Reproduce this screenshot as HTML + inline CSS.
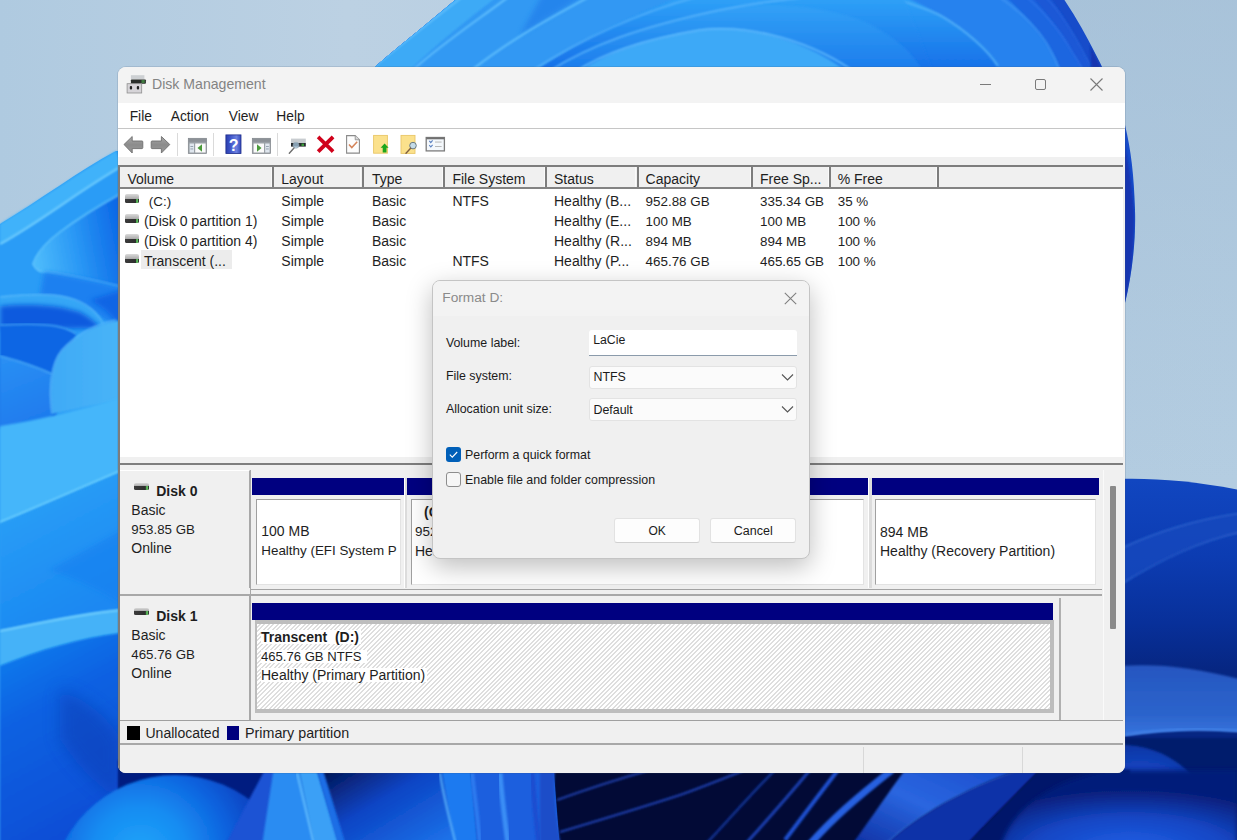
<!DOCTYPE html>
<html><head><meta charset="utf-8">
<style>
html,body{margin:0;padding:0;width:1237px;height:840px;overflow:hidden;background:#adc8de;}
*{box-sizing:border-box;}
body{font-family:"Liberation Sans",sans-serif;color:#1e1e1e;position:relative;}
.a{position:absolute;}
.t{position:absolute;white-space:pre;line-height:1;}
#bg{position:absolute;left:0;top:0;}
#winshadow{position:absolute;left:117px;top:66px;width:1009px;height:708px;border-radius:9px;background:rgba(60,80,110,0.15);filter:blur(0.6px);}
#win{position:absolute;left:0;top:0;width:1237px;height:840px;clip-path:inset(67px 112px 67px 118px round 8px);}
</style></head>
<body>
<svg id="bg" width="1237" height="840" viewBox="0 0 1237 840">
<defs>
  <linearGradient id="sky" x1="0" y1="0" x2="1" y2="0">
    <stop offset="0" stop-color="#afcae0"/>
    <stop offset="0.28" stop-color="#bcd1e3"/>
    <stop offset="0.85" stop-color="#b2cbe0"/>
    <stop offset="1" stop-color="#b4cde1"/>
  </linearGradient>
  <linearGradient id="topb" x1="0" y1="0" x2="1" y2="0">
    <stop offset="0" stop-color="#3ba4f4"/>
    <stop offset="0.5" stop-color="#2c8df0"/>
    <stop offset="0.85" stop-color="#2a7cec"/>
    <stop offset="1" stop-color="#1a4cd4"/>
  </linearGradient>
  <linearGradient id="leftb" x1="0" y1="0" x2="0" y2="1">
    <stop offset="0" stop-color="#3aa2f3"/>
    <stop offset="0.2" stop-color="#2b8cef"/>
    <stop offset="0.45" stop-color="#2e92f0"/>
    <stop offset="0.62" stop-color="#2480ec"/>
    <stop offset="0.8" stop-color="#1563e0"/>
    <stop offset="0.92" stop-color="#0b44c4"/>
    <stop offset="1" stop-color="#0d4ac8"/>
  </linearGradient>
  <linearGradient id="rightb" x1="0" y1="0" x2="0" y2="1">
    <stop offset="0" stop-color="#0e42ba"/>
    <stop offset="0.3" stop-color="#0b37a8"/>
    <stop offset="0.5" stop-color="#082c92"/>
    <stop offset="1" stop-color="#072680"/>
  </linearGradient>
  <radialGradient id="sph1" cx="0.5" cy="0.75" r="0.6">
    <stop offset="0" stop-color="#1e8ef0"/>
    <stop offset="0.6" stop-color="#1466e0"/>
    <stop offset="1" stop-color="#0b44c4"/>
  </radialGradient>
  <radialGradient id="sph2" cx="0.5" cy="0.85" r="0.6">
    <stop offset="0" stop-color="#1f62e0"/>
    <stop offset="1" stop-color="#0a2f9c"/>
  </radialGradient>
  <radialGradient id="sph3" cx="0.35" cy="0.8" r="0.7">
    <stop offset="0" stop-color="#1a55d8"/>
    <stop offset="1" stop-color="#0a2a8e"/>
  </radialGradient>
  <linearGradient id="navy" x1="0" y1="0" x2="1" y2="0">
    <stop offset="0" stop-color="#020c40"/>
    <stop offset="1" stop-color="#031050"/>
  </linearGradient>
  <linearGradient id="bigpet" gradientUnits="userSpaceOnUse" x1="0" y1="0" x2="0" y2="70"><stop offset="0" stop-color="#2ea0f7"/><stop offset="1" stop-color="#1670e8"/></linearGradient>
  <linearGradient id="bigpet2" gradientUnits="userSpaceOnUse" x1="0" y1="0" x2="0" y2="70"><stop offset="0" stop-color="#34a4f7"/><stop offset="1" stop-color="#1c7cec"/></linearGradient>
  <filter id="bl" x="-5%" y="-5%" width="110%" height="110%"><feGaussianBlur stdDeviation="1"/></filter>
  <filter id="bl2" x="-20%" y="-20%" width="140%" height="140%"><feGaussianBlur stdDeviation="2.5"/></filter>
  <filter id="bl3" x="-30%" y="-30%" width="160%" height="160%"><feGaussianBlur stdDeviation="8"/></filter>
</defs>
<rect width="1237" height="840" fill="url(#sky)"/>
<linearGradient id="skyR" gradientUnits="userSpaceOnUse" x1="0" y1="0" x2="0" y2="480"><stop offset="0" stop-color="#9fbbd4" stop-opacity="0.55"/><stop offset="1" stop-color="#9fbbd4" stop-opacity="0"/></linearGradient>
<rect x="1060" y="0" width="177" height="480" fill="url(#skyR)"/>
<!-- ===== top bloom ===== -->
<clipPath id="bloomclip"><path d="M461 -5 C430 22 398 46 360 80 L360 200 L1125 200 L1125 303 C1132 275 1136 240 1135 210 C1134 175 1131 150 1125 125 C1118 100 1108 78 1096 55 C1086 35 1075 15 1061 -5 Z"/></clipPath>
<g clip-path="url(#bloomclip)">
  <rect x="300" y="-10" width="900" height="320" fill="#174cca"/>
  <path d="M300 -10 L1044 -10 C1060 10 1075 35 1090 65 C1110 100 1122 150 1128 200 L300 200Z" fill="#1a58d6" filter="url(#bl)"/>
  <path d="M300 -10 L1025 -10 C1040 5 1060 30 1071 50 C1080 65 1110 110 1118 200 L300 200Z" fill="#1c66e0" filter="url(#bl)"/>
  <path d="M300 -10 L998 -10 C1015 5 1035 25 1046 42 C1055 55 1080 100 1100 200 L300 200Z" fill="#2682ee" filter="url(#bl)"/>
  <path d="M300 -10 L892 -10 C910 0 930 8 943 17 C965 30 990 50 998 66 L1000 200 L300 200Z" fill="url(#bigpet)" filter="url(#bl)"/>
  <path d="M998 -4 C1015 8 1035 25 1046 42 C1052 52 1056 60 1059 70" fill="none" stroke="#4a9cf6" stroke-width="1.3" opacity="0.8" filter="url(#bl)"/>
  <path d="M1025 -4 C1040 8 1060 30 1071 50 C1076 58 1080 64 1083 70" fill="none" stroke="#3a7ef0" stroke-width="1.2" opacity="0.7" filter="url(#bl)"/>
  <path d="M1044 -4 C1060 10 1075 35 1090 65" fill="none" stroke="#3470e6" stroke-width="1.1" opacity="0.7" filter="url(#bl)"/>
  <path d="M892 -2 C915 5 935 12 943 17 C965 30 988 50 998 66" fill="none" stroke="#58b4fa" stroke-width="1.8" filter="url(#bl)"/>
  <!-- inner petal A region -->
  <path d="M530 75 C580 40 640 12 700 -10 L300 -10 L300 75Z" fill="#3098f3" filter="url(#bl)"/>
  <path d="M530 75 C580 40 640 12 700 -10 L900 -10 C910 10 920 40 935 75Z" fill="url(#bigpet)" filter="url(#bl)"/>
  <path d="M548 75 C590 45 640 27 720 10 C780 -2 850 10 880 30 C900 42 915 55 925 75Z" fill="url(#bigpet2)" filter="url(#bl)"/>
  <path d="M575 75 C600 55 640 40 700 30 C740 25 800 35 852 75Z" fill="#3ea9f7" filter="url(#bl)"/>
  <path d="M575 72 C600 55 640 40 700 30 C740 25 800 35 852 70" fill="none" stroke="#66c0ff" stroke-width="1.5" filter="url(#bl)"/>
  <path d="M548 72 C590 45 640 27 720 10 C750 4 780 0 800 -2" fill="none" stroke="#5fb8fd" stroke-width="1.4" filter="url(#bl)"/>
  <path d="M530 72 C580 40 640 12 700 -4" fill="none" stroke="#5fb8fd" stroke-width="1.3" filter="url(#bl)"/>
  <!-- left petals -->
  <path d="M300 -10 L507 -10 C480 10 440 40 405 75 L300 75Z" fill="#3eaaf6" filter="url(#bl)"/>
  <path d="M507 -10 L590 -10 C560 10 510 40 470 75 L410 75 C440 45 475 15 507 -10Z" fill="#3299f3" filter="url(#bl)"/>
  <path d="M545 -10 L590 -10 C570 5 545 20 520 35 Z" fill="#1f78e8" opacity="0.6" filter="url(#bl2)"/>
  <path d="M413 70 C440 45 475 22 507 -2" fill="none" stroke="#66c4ff" stroke-width="1.6" filter="url(#bl)"/>
  <path d="M472 70 C510 40 550 18 587 -2" fill="none" stroke="#66c4ff" stroke-width="1.6" filter="url(#bl)"/>
  <path d="M370 70 C400 45 430 22 461 -2" fill="none" stroke="#70c8ff" stroke-width="1.4" filter="url(#bl)"/>
  <!-- right side sliver shading -->
  <path d="M1090 45 C1112 85 1128 140 1134 210 C1135 250 1130 285 1125 303 L1105 303 L1090 45Z" fill="#1236b0" filter="url(#bl)"/>
</g>
<!-- ===== left bloom ===== -->
<linearGradient id="tipg" x1="0" y1="0.5" x2="1" y2="0.3">
  <stop offset="0" stop-color="#4cbafb"/><stop offset="0.45" stop-color="#2a98f5"/><stop offset="1" stop-color="#0a66e6"/>
</linearGradient>
<linearGradient id="petC" x1="0" y1="0" x2="0.3" y2="1">
  <stop offset="0" stop-color="#2a90f4"/><stop offset="1" stop-color="#1f7cee"/>
</linearGradient>
<linearGradient id="petD" x1="0" y1="0" x2="1" y2="0">
  <stop offset="0" stop-color="#40aaf6"/><stop offset="1" stop-color="#48b4f8"/>
</linearGradient>
<linearGradient id="lowL" x1="0" y1="0" x2="0.3" y2="1">
  <stop offset="0" stop-color="#1282f0"/><stop offset="0.4" stop-color="#0a62e2"/><stop offset="1" stop-color="#0a4ed6"/>
</linearGradient>
<linearGradient id="midL" x1="0" y1="0" x2="0.4" y2="1">
  <stop offset="0" stop-color="#2ea4f7"/><stop offset="1" stop-color="#1a88f2"/>
</linearGradient>
<radialGradient id="sphL" cx="0.5" cy="0.9" r="0.7">
  <stop offset="0" stop-color="#2290f4"/><stop offset="0.7" stop-color="#1670ea"/><stop offset="1" stop-color="#0d56da"/>
</radialGradient>
<path d="M116 151 C80 170 40 200 0 224 L-10 230 L-10 850 L122 850 L122 151Z" fill="#2a9cf6"/>
<path d="M116 151 C80 172 40 200 0 224 L0 244 C40 222 80 190 122 166 Z" fill="#40b2fa" filter="url(#bl)"/>
<path d="M0 244 C40 222 80 190 122 166" fill="none" stroke="#7ad4ff" stroke-width="1.8" filter="url(#bl)"/>
<!-- tip petal -->
<path d="M122 193 C100 205 76 220 60 232 C45 243 36 255 33 264 C36 270 40 272 44 272 C60 274 80 277 122 287 Z" fill="url(#tipg)" filter="url(#bl)"/>
<path d="M122 193 C100 205 76 220 60 232 C45 243 36 255 33 264 C36 270 40 272 44 272 C60 274 80 277 122 287" fill="none" stroke="#70cfff" stroke-width="1.5" opacity="0.8" filter="url(#bl)"/>
<path d="M44 272 C60 274 80 277 122 287 L122 330 C100 315 70 300 40 295 Z" fill="#1a80f0" filter="url(#bl2)"/>
<path d="M90 300 C105 308 115 318 122 330 L122 290 Z" fill="#0a5ee2" opacity="0.8" filter="url(#bl2)"/>
<!-- petal B / C -->
<path d="M0 297 C20 295 46 294 60 296 C80 299 95 309 103 323 L0 326 Z" fill="#36a6f6" filter="url(#bl)"/>
<path d="M0 297 C20 295 46 294 60 296 C80 299 95 309 103 323" fill="none" stroke="#62c0fc" stroke-width="1.4" opacity="0.8" filter="url(#bl)"/>
<path d="M0 306 C30 303 60 305 80 312 C90 317 96 323 100 328 L0 330Z" fill="#0b5ade" filter="url(#bl2)"/>
<path d="M0 325 C20 324 46 323 60 327 C68 329 72 331 76 334 L55 420 L0 428 Z" fill="#0f66e4" filter="url(#bl)"/>
<path d="M0 325 C20 324 46 323 60 327 C68 329 72 331 76 334" fill="none" stroke="#50b0f8" stroke-width="1.4" opacity="0.8" filter="url(#bl)"/>
<path d="M0 356 C15 360 35 366 52 374 L52 420 L0 428 Z" fill="url(#petC)" filter="url(#bl)"/>
<path d="M0 356 C15 360 35 366 52 374" fill="none" stroke="#58b8fa" stroke-width="1.4" opacity="0.8" filter="url(#bl)"/>

<!-- round petal D -->
<path d="M122 320 C95 324 76 335 62 350 C52 362 48 385 52 414 L122 400 Z" fill="url(#petD)" filter="url(#bl)"/>
<path d="M116 320 C95 324 76 335 62 350 C52 362 48 385 52 414" fill="none" stroke="#6ac4ff" stroke-width="1.3" opacity="0.7" filter="url(#bl)"/>
<!-- light band -->
<path d="M0 426 C40 420 80 410 122 397 L122 472 C80 489 40 507 0 524 Z" fill="#44b6fa" filter="url(#bl)"/>
<path d="M0 522 C40 506 80 488 122 470" fill="none" stroke="#72d2ff" stroke-width="1.6" opacity="0.9" filter="url(#bl)"/>
<path d="M0 524 C40 508 80 490 122 472 L122 612 C80 616 40 624 0 632 Z" fill="url(#midL)" filter="url(#bl)"/>
<path d="M50 570 C80 580 110 595 122 605 L122 530 Z" fill="#1580f0" opacity="0.6" filter="url(#bl2)"/>
<!-- lower light band -->
<path d="M0 630 C40 622 80 613 122 609 L122 633 C80 638 40 650 0 666 Z" fill="#44b2f8" filter="url(#bl)"/>
<path d="M0 631 C40 623 80 614 122 610" fill="none" stroke="#80d8ff" stroke-width="1.6" filter="url(#bl)"/>
<path d="M0 666 C40 650 80 638 122 633 L122 850 L0 850 Z" fill="url(#lowL)" filter="url(#bl)"/>
<path d="M60 690 C90 700 110 720 122 740 L122 800 C100 790 80 770 60 740Z" fill="#0740b8" opacity="0.6" filter="url(#bl3)"/>
<!-- ===== right lower ===== -->
<linearGradient id="rtop" gradientUnits="userSpaceOnUse" x1="0" y1="480" x2="0" y2="670">
  <stop offset="0" stop-color="#1146c0"/><stop offset="0.4" stop-color="#0c3cb2"/><stop offset="0.75" stop-color="#08309a"/><stop offset="1" stop-color="#062682"/>
</linearGradient>
<linearGradient id="rband" gradientUnits="userSpaceOnUse" x1="0" y1="665" x2="0" y2="736">
  <stop offset="0" stop-color="#2556c0"/><stop offset="0.7" stop-color="#2c64cc"/><stop offset="1" stop-color="#3674de"/>
</linearGradient>
<radialGradient id="sphRR" gradientUnits="userSpaceOnUse" cx="1140" cy="830" r="95">
  <stop offset="0" stop-color="#1f5ee0"/><stop offset="0.6" stop-color="#1548c4"/><stop offset="1" stop-color="#0a2f9a"/>
</radialGradient>
<path d="M1120 479 C1160 478 1200 482 1250 492 L1250 850 L1120 850 Z" fill="url(#rtop)"/>
<path d="M1120 549 C1160 530 1200 518 1250 512 L1250 532 C1200 538 1160 560 1120 585 Z" fill="#1248be" opacity="0.8" filter="url(#bl)"/>
<path d="M1120 549 C1160 530 1200 518 1250 512" fill="none" stroke="#2e62cc" stroke-width="1.6" filter="url(#bl)"/>
<path d="M1120 585 C1160 560 1200 540 1250 530" fill="none" stroke="#2a5cc8" stroke-width="1.6" filter="url(#bl)"/>
<path d="M1120 666 C1160 663 1200 668 1250 682 L1250 732 C1200 728 1160 730 1120 736 Z" fill="url(#rband)" filter="url(#bl)"/>
<path d="M1120 736 C1160 729 1200 727 1250 732" fill="none" stroke="#4a8cf2" stroke-width="2.2" filter="url(#bl)"/>
<path d="M1120 738 L1250 738 L1250 850 L1120 850Z" fill="#051c6c" filter="url(#bl)"/>
<path d="M1110 745 C1170 742 1210 775 1224 850 L1110 850Z" fill="url(#sphRR)" filter="url(#bl)"/>
<!-- ===== bottom strip ===== -->
<radialGradient id="sphB" gradientUnits="userSpaceOnUse" cx="140" cy="855" r="120">
  <stop offset="0" stop-color="#20a6fa"/><stop offset="0.4" stop-color="#168cf2"/><stop offset="0.75" stop-color="#0e62de"/><stop offset="1" stop-color="#0a46c4"/>
</radialGradient>
<linearGradient id="navL" x1="0" y1="0" x2="1" y2="1">
  <stop offset="0" stop-color="#020a3c"/><stop offset="0.45" stop-color="#0c44c4"/><stop offset="1" stop-color="#1f78ee"/>
</linearGradient>
<rect x="118" y="760" width="450" height="85" fill="#0a3aae"/>
<path d="M118 760 L275 760 L232 845 L118 845Z" fill="#061e80" filter="url(#bl)"/>
<circle cx="175" cy="900" r="125" fill="url(#sphB)" filter="url(#bl)"/>
<path d="M270 760 L290 760 L262 845 L225 845Z" fill="#1a52d4" filter="url(#bl)"/>
<path d="M275 760 L298 760 L316 845 L262 845Z" fill="#2a8cf2" filter="url(#bl)"/>
<path d="M297 760 L314 760 L340 845 L314 845Z" fill="#3aa0f6" filter="url(#bl)"/>
<path d="M297 773 L314 845" stroke="#70c8ff" stroke-width="1.5" fill="none" filter="url(#bl)"/>
<path d="M314 760 L322 760 L348 845 L338 845Z" fill="#1f6ee6" filter="url(#bl)"/>
<path d="M320 760 L445 760 L460 845 L346 845Z" fill="url(#navL)" filter="url(#bl)"/>
<path d="M440 760 L470 760 L478 845 L455 845Z" fill="#1f7af0" filter="url(#bl)"/>
<path d="M440 773 C444 800 450 820 456 845" stroke="#58b0fa" stroke-width="2" fill="none" filter="url(#bl)"/>
<path d="M470 760 L555 760 L562 845 L478 845Z" fill="#1a5ede" filter="url(#bl)"/>
<path d="M472 773 C475 800 478 820 480 845" stroke="#2e7cf0" stroke-width="4" fill="none" filter="url(#bl)"/>
<path d="M500 773 C502 800 505 820 508 845" stroke="#3a8ef5" stroke-width="5" fill="none" filter="url(#bl)"/>
<path d="M532 773 C534 800 536 820 539 845" stroke="#1a4ed0" stroke-width="5" fill="none" filter="url(#bl)"/>
<!-- navy center -->
<linearGradient id="petR" x1="0" y1="1" x2="1" y2="0">
  <stop offset="0" stop-color="#0a2a9c"/><stop offset="0.5" stop-color="#2a66e0"/><stop offset="1" stop-color="#1a4ccc"/>
</linearGradient>
<radialGradient id="sphR" cx="0.55" cy="1" r="0.75">
  <stop offset="0" stop-color="#2060e6"/><stop offset="0.55" stop-color="#1446c4"/><stop offset="1" stop-color="#061e7a"/>
</radialGradient>
<path d="M553 760 L1040 760 L1040 850 L560 850 Z" fill="#020a36"/>
<path d="M540 760 L556 760 C552 790 555 820 562 850 L540 850Z" fill="#1a4ec8" filter="url(#bl)"/>
<g fill="none" filter="url(#bl)">
  <path d="M557 800 C590 788 615 780 650 770" stroke="#1e3ea8" stroke-width="2.2"/>
  <path d="M560 832 C600 820 640 808 680 795 C700 788 720 780 745 770" stroke="#1e40b0" stroke-width="2.2"/>
  <path d="M700 850 C720 830 745 800 775 770" stroke="#12308f" stroke-width="2.5"/>
  <path d="M740 850 C760 828 785 800 810 770" stroke="#1a3fb0" stroke-width="3"/>
  <path d="M785 840 C800 820 815 800 838 770" stroke="#1f4fcf" stroke-width="4"/>
  <path d="M805 850 C830 820 860 795 892 770" stroke="#2560e0" stroke-width="7"/>
</g>
<path d="M848 850 C870 820 890 790 905 770 L1020 770 C960 790 910 820 880 850Z" fill="url(#petR)" filter="url(#bl)"/>
<path d="M880 850 C910 820 960 790 1020 772" fill="none" stroke="#3f80f0" stroke-width="2" filter="url(#bl)"/>
<path d="M880 850 C910 820 960 790 1020 770 L1040 770 C1010 800 985 825 962 850Z" fill="#0c32a8" filter="url(#bl)"/>
<path d="M962 850 C985 825 1010 800 1040 770 L1130 770 L1130 850Z" fill="#04166a" filter="url(#bl)"/>
<path d="M1000 850 C1010 810 1050 780 1110 770 L1237 770 L1237 850Z" fill="url(#sphR)" filter="url(#bl2)"/>
</svg>

<div id="winshadow"></div>
<div id="win">
<div class="a" style="left:118px;top:67px;width:1007.0px;height:706.0px;background:#f0f0f0;"></div>
<div class="a" style="left:118px;top:67px;width:1007.0px;height:36.0px;background:#f3f3f3;"></div>
<div class="t" style="left:152.0px;top:77.26px;font-size:14.1px;color:#838383;">Disk Management</div>
<div class="a" style="left:979.5px;top:83.5px;width:11.5px;height:1.1px;background:#7a7a7a;"></div>
<div class="a" style="left:1035px;top:79px;width:11.0px;height:11.0px;border:1.2px solid #7a7a7a;border-radius:2px;"></div>
<svg class="a" style="left:1089px;top:77px" width="15" height="15" viewBox="0 0 15 15"><path d="M1.5 1.5L13.5 13.5M13.5 1.5L1.5 13.5" stroke="#7a7a7a" stroke-width="1.1" fill="none"/></svg>
<div class="a" style="left:118px;top:103px;width:1007.0px;height:25.0px;background:#fff;"></div>
<div class="t" style="left:129.7px;top:109.92px;font-size:13.8px;">File</div>
<div class="t" style="left:170.7px;top:109.92px;font-size:13.8px;">Action</div>
<div class="t" style="left:228.8px;top:109.92px;font-size:13.8px;">View</div>
<div class="t" style="left:276.3px;top:109.92px;font-size:13.8px;">Help</div>
<div class="a" style="left:118px;top:128px;width:1007.0px;height:1.2px;background:#c6c6c6;"></div>
<div class="a" style="left:118px;top:129.2px;width:1007.0px;height:27.8px;background:#fff;"></div>
<div class="a" style="left:118px;top:157px;width:1007.0px;height:7.5px;background:#f0f0f0;"></div>
<div class="a" style="left:176.5px;top:133px;width:1.3px;height:23.0px;background:#dadada;"></div>
<div class="a" style="left:213px;top:133px;width:1.3px;height:23.0px;background:#dadada;"></div>
<div class="a" style="left:277px;top:133px;width:1.3px;height:23.0px;background:#dadada;"></div>
<svg class="a" style="left:118px;top:129px" width="340" height="28" viewBox="118 129 340 28">
<defs>
<linearGradient id="arrg" x1="0" y1="0" x2="0" y2="1"><stop offset="0" stop-color="#a8a8a8"/><stop offset="0.5" stop-color="#8c8c8c"/><stop offset="1" stop-color="#9a9a9a"/></linearGradient>
<linearGradient id="helpg" x1="0" y1="0" x2="1" y2="0"><stop offset="0" stop-color="#2a3fb0"/><stop offset="0.3" stop-color="#3f55c8"/><stop offset="0.7" stop-color="#6a80e0"/><stop offset="1" stop-color="#3448b8"/></linearGradient>
</defs>
<!-- back arrow -->
<path d="M124 144.5 L132.2 136.5 L132.2 141 L142.2 141 Q142.8 141 142.8 142 L142.8 147.6 Q142.8 148.6 142 148.6 L132.2 148.6 L132.2 153 Z" fill="url(#arrg)" stroke="#6e6e6e" stroke-width="0.9" stroke-linejoin="round"/>
<!-- forward arrow -->
<path d="M169.8 144.5 L161.4 136.5 L161.4 141 L152 141 Q151.2 141 151.2 142 L151.2 147.6 Q151.2 148.6 152 148.6 L161.4 148.6 L161.4 153 Z" fill="url(#arrg)" stroke="#6e6e6e" stroke-width="0.9" stroke-linejoin="round"/>
<!-- console tree icon -->
<rect x="188.3" y="138.3" width="18.3" height="15.2" fill="#9aa0a6" stroke="#80858b" stroke-width="0.7"/>
<rect x="188.6" y="138.6" width="17.8" height="3.2" fill="#8c9197"/>
<rect x="189.6" y="143.5" width="4.4" height="9" fill="#dfe6ee"/>
<rect x="195.2" y="143.5" width="10.4" height="9" fill="#fafafa"/>
<rect x="190.4" y="146" width="2.8" height="0.9" fill="#8d9aa8"/>
<rect x="190.4" y="148.5" width="2.8" height="0.9" fill="#8d9aa8"/>
<path d="M197.5 148 L202 144.3 L202 151.7 Z" fill="#4a9a3a"/>
<!-- help icon -->
<rect x="225.9" y="134.9" width="15.1" height="18.7" fill="url(#helpg)" stroke="#1e2d8a" stroke-width="0.8"/>
<text x="233.6" y="151.3" font-family="Liberation Sans" font-weight="700" font-size="16" fill="#fff" text-anchor="middle">?</text>
<!-- action pane icon -->
<rect x="252.3" y="138.3" width="18.3" height="15.2" fill="#9aa0a6" stroke="#80858b" stroke-width="0.7"/>
<rect x="252.6" y="138.6" width="17.8" height="3.2" fill="#8c9197"/>
<rect x="253.6" y="143.5" width="10.4" height="9" fill="#fafafa"/>
<rect x="265.2" y="143.5" width="4.4" height="9" fill="#dfe6ee"/>
<rect x="266" y="146" width="2.8" height="0.9" fill="#8d9aa8"/>
<rect x="266" y="148.5" width="2.8" height="0.9" fill="#8d9aa8"/>
<path d="M261.5 148 L257 144.3 L257 151.7 Z" fill="#4a9a3a"/>
<!-- connect disk icon -->
<rect x="291" y="138.6" width="14.8" height="4.4" fill="#c8ccd0"/>
<rect x="291" y="143" width="14.8" height="3.6" fill="#262a2e"/>
<rect x="301.5" y="143.6" width="2.5" height="2.4" fill="#3a9a3a"/>
<circle cx="296" cy="145.2" r="3" fill="#a8c8e0" fill-opacity="0.75" stroke="#8a9aa8" stroke-width="0.6"/>
<path d="M294 148 L289.3 153.3" stroke="#707070" stroke-width="1.4" stroke-linecap="round"/>
<!-- red X -->
<path d="M319.5 138.3 L331.7 150.2 M331.7 138.3 L319.5 150.2" stroke="#d0021b" stroke-width="3.8" stroke-linecap="square"/>
<!-- doc check -->
<path d="M346.6 135.6 L355.2 135.6 L359.4 139.8 L359.4 153.1 L346.6 153.1 Z" fill="#fdfdfd" stroke="#8a8a8a" stroke-width="1.1"/>
<path d="M355.2 135.6 L355.2 139.8 L359.4 139.8" fill="#d8d8d8" stroke="#8a8a8a" stroke-width="0.8"/>
<path d="M349 144.5 L351.8 147.6 L357.2 141.8" fill="none" stroke="#d4845a" stroke-width="1.5"/>
<!-- folder up -->
<rect x="373.6" y="135.4" width="13.8" height="17.8" fill="#fbe18c" stroke="#e9c667" stroke-width="0.9"/>
<path d="M384.6 143.6 L388.6 147.8 L386.5 147.8 L386.5 152.6 L382.7 152.6 L382.7 147.8 L380.6 147.8 Z" fill="#1ca61c"/>
<!-- folder search -->
<rect x="401" y="135.4" width="14" height="18" fill="#fbe18c" stroke="#e9c667" stroke-width="0.9"/>
<circle cx="413" cy="145.6" r="3.3" fill="#c4dbe8" stroke="#6a7a80" stroke-width="1"/>
<path d="M410.6 148.2 L406 153.3" stroke="#806040" stroke-width="1.4" stroke-linecap="round"/>
<!-- properties -->
<rect x="426.2" y="137.5" width="18.2" height="13.4" fill="#f4f8fc" stroke="#7c7c7c" stroke-width="1.3"/>
<rect x="426.2" y="137.5" width="18.2" height="1.8" fill="#707070"/>
<path d="M429.3 140.8 L430.8 142.6 L432.6 140.4 M429.3 145.2 L430.8 147 L432.6 144.8" fill="none" stroke="#5a80c0" stroke-width="1.1"/>
<rect x="435" y="141.6" width="6.6" height="0.9" fill="#b0b0b0"/>
<rect x="435" y="146" width="6.6" height="0.9" fill="#b0b0b0"/>
</svg>
<!-- title icon -->
<svg class="a" style="left:126px;top:74px" width="22" height="21" viewBox="126 74 22 21">
<rect x="130.9" y="75.2" width="13.5" height="4.3" fill="#cdd0d3"/>
<rect x="130.9" y="79.4" width="15" height="4.3" rx="0.8" fill="#2a2e2a"/>
<rect x="141.5" y="80" width="3.2" height="3" fill="#3f7a3f"/>
<rect x="127.1" y="83.7" width="14.6" height="9.3" fill="#d6d4d8" stroke="#8f8f8f" stroke-width="0.8"/>
<rect x="129.8" y="85.9" width="2.3" height="3.5" rx="1" fill="#222"/>
<rect x="136.8" y="85.9" width="2.3" height="3.5" rx="1" fill="#222"/>
</svg>

<div class="a" style="left:118px;top:164.5px;width:1005.0px;height:298.5px;background:#fff;"></div>
<div class="a" style="left:118px;top:164.5px;width:1005.0px;height:2.0px;background:#7d7d7d;"></div>
<div class="a" style="left:118px;top:164.5px;width:2.2px;height:608.5px;background:#7d7d7d;"></div>
<div class="a" style="left:120.2px;top:166.5px;width:1002.8px;height:20.5px;background:#f0f0f0;"></div>
<div class="a" style="left:120.2px;top:187px;width:1002.8px;height:2.0px;background:#838383;"></div>
<div class="a" style="left:270.5px;top:166.5px;width:1.0px;height:20.5px;background:#fafafa;"></div>
<div class="a" style="left:272px;top:166.5px;width:2.0px;height:20.5px;background:#7d7d7d;"></div>
<div class="a" style="left:360.0px;top:166.5px;width:1.0px;height:20.5px;background:#fafafa;"></div>
<div class="a" style="left:361.5px;top:166.5px;width:2.0px;height:20.5px;background:#7d7d7d;"></div>
<div class="a" style="left:441.5px;top:166.5px;width:1.0px;height:20.5px;background:#fafafa;"></div>
<div class="a" style="left:443px;top:166.5px;width:2.0px;height:20.5px;background:#7d7d7d;"></div>
<div class="a" style="left:543.5px;top:166.5px;width:1.0px;height:20.5px;background:#fafafa;"></div>
<div class="a" style="left:545px;top:166.5px;width:2.0px;height:20.5px;background:#7d7d7d;"></div>
<div class="a" style="left:635.0px;top:166.5px;width:1.0px;height:20.5px;background:#fafafa;"></div>
<div class="a" style="left:636.5px;top:166.5px;width:2.0px;height:20.5px;background:#7d7d7d;"></div>
<div class="a" style="left:749.5px;top:166.5px;width:1.0px;height:20.5px;background:#fafafa;"></div>
<div class="a" style="left:751px;top:166.5px;width:2.0px;height:20.5px;background:#7d7d7d;"></div>
<div class="a" style="left:827.5px;top:166.5px;width:1.0px;height:20.5px;background:#fafafa;"></div>
<div class="a" style="left:829px;top:166.5px;width:2.0px;height:20.5px;background:#7d7d7d;"></div>
<div class="a" style="left:935.5px;top:166.5px;width:1.0px;height:20.5px;background:#fafafa;"></div>
<div class="a" style="left:937px;top:166.5px;width:2.0px;height:20.5px;background:#7d7d7d;"></div>
<div class="t" style="left:127.4px;top:172.45px;font-size:14px;">Volume</div>
<div class="t" style="left:281.3px;top:172.45px;font-size:14px;">Layout</div>
<div class="t" style="left:372.0px;top:172.45px;font-size:14px;">Type</div>
<div class="t" style="left:452.4px;top:172.45px;font-size:14px;">File System</div>
<div class="t" style="left:554.0px;top:172.45px;font-size:14px;">Status</div>
<div class="t" style="left:645.6px;top:172.45px;font-size:14px;">Capacity</div>
<div class="t" style="left:760.0px;top:172.45px;font-size:14px;">Free Sp...</div>
<div class="t" style="left:837.7px;top:172.45px;font-size:14px;">% Free</div>
<div class="a" style="left:141.2px;top:250.2px;width:90.6px;height:19.2px;background:#ececec;"></div>
<div class="a" style="left:124.6px;top:194.39999999999998px;width:14.6px;height:4.2px;background:linear-gradient(#dadada,#aaaaaa);border-radius:2px 2px 0 0;"></div>
<div class="a" style="left:124.6px;top:198.6px;width:14.6px;height:4.2px;background:linear-gradient(90deg,#3c3c3c 0%,#2e2e2e 76%,#4f9f4f 80%,#5cb85c 90%,#2f3f2f 96%);border-radius:0 0 1.5px 1.5px;"></div>
<div class="t" style="left:148.8px;top:194.86px;font-size:13.4px;">(C:)</div>
<div class="t" style="left:281.3px;top:194.35px;font-size:14px;">Simple</div>
<div class="t" style="left:372.0px;top:194.35px;font-size:14px;">Basic</div>
<div class="t" style="left:452.4px;top:194.35px;font-size:14px;">NTFS</div>
<div class="t" style="left:554.0px;top:194.35px;font-size:14px;">Healthy (B...</div>
<div class="t" style="left:645.6px;top:194.86px;font-size:13.4px;">952.88 GB</div>
<div class="t" style="left:760.0px;top:194.86px;font-size:13.4px;">335.34 GB</div>
<div class="t" style="left:837.7px;top:194.86px;font-size:13.4px;">35 %</div>
<div class="a" style="left:124.6px;top:214.39999999999998px;width:14.6px;height:4.2px;background:linear-gradient(#dadada,#aaaaaa);border-radius:2px 2px 0 0;"></div>
<div class="a" style="left:124.6px;top:218.6px;width:14.6px;height:4.2px;background:linear-gradient(90deg,#3c3c3c 0%,#2e2e2e 76%,#4f9f4f 80%,#5cb85c 90%,#2f3f2f 96%);border-radius:0 0 1.5px 1.5px;"></div>
<div class="t" style="left:143.9px;top:214.35px;font-size:14px;">(Disk 0 partition 1)</div>
<div class="t" style="left:281.3px;top:214.35px;font-size:14px;">Simple</div>
<div class="t" style="left:372.0px;top:214.35px;font-size:14px;">Basic</div>
<div class="t" style="left:554.0px;top:214.35px;font-size:14px;">Healthy (E...</div>
<div class="t" style="left:645.6px;top:214.86px;font-size:13.4px;">100 MB</div>
<div class="t" style="left:760.0px;top:214.86px;font-size:13.4px;">100 MB</div>
<div class="t" style="left:837.7px;top:214.86px;font-size:13.4px;">100 %</div>
<div class="a" style="left:124.6px;top:234.39999999999998px;width:14.6px;height:4.2px;background:linear-gradient(#dadada,#aaaaaa);border-radius:2px 2px 0 0;"></div>
<div class="a" style="left:124.6px;top:238.6px;width:14.6px;height:4.2px;background:linear-gradient(90deg,#3c3c3c 0%,#2e2e2e 76%,#4f9f4f 80%,#5cb85c 90%,#2f3f2f 96%);border-radius:0 0 1.5px 1.5px;"></div>
<div class="t" style="left:143.9px;top:234.35px;font-size:14px;">(Disk 0 partition 4)</div>
<div class="t" style="left:281.3px;top:234.35px;font-size:14px;">Simple</div>
<div class="t" style="left:372.0px;top:234.35px;font-size:14px;">Basic</div>
<div class="t" style="left:554.0px;top:234.35px;font-size:14px;">Healthy (R...</div>
<div class="t" style="left:645.6px;top:234.86px;font-size:13.4px;">894 MB</div>
<div class="t" style="left:760.0px;top:234.86px;font-size:13.4px;">894 MB</div>
<div class="t" style="left:837.7px;top:234.86px;font-size:13.4px;">100 %</div>
<div class="a" style="left:124.6px;top:254.39999999999998px;width:14.6px;height:4.2px;background:linear-gradient(#dadada,#aaaaaa);border-radius:2px 2px 0 0;"></div>
<div class="a" style="left:124.6px;top:258.59999999999997px;width:14.6px;height:4.2px;background:linear-gradient(90deg,#3c3c3c 0%,#2e2e2e 76%,#4f9f4f 80%,#5cb85c 90%,#2f3f2f 96%);border-radius:0 0 1.5px 1.5px;"></div>
<div class="t" style="left:143.9px;top:254.35px;font-size:14px;">Transcent (...</div>
<div class="t" style="left:281.3px;top:254.35px;font-size:14px;">Simple</div>
<div class="t" style="left:372.0px;top:254.35px;font-size:14px;">Basic</div>
<div class="t" style="left:452.4px;top:254.35px;font-size:14px;">NTFS</div>
<div class="t" style="left:554.0px;top:254.35px;font-size:14px;">Healthy (P...</div>
<div class="t" style="left:645.6px;top:254.86px;font-size:13.4px;">465.76 GB</div>
<div class="t" style="left:760.0px;top:254.86px;font-size:13.4px;">465.65 GB</div>
<div class="t" style="left:837.7px;top:254.86px;font-size:13.4px;">100 %</div>
<div class="a" style="left:120.2px;top:457px;width:1002.8px;height:6.0px;background:#f0f0f0;"></div>
<div class="a" style="left:120.2px;top:463px;width:1002.8px;height:2.0px;background:#7e7e7e;"></div>
<div class="a" style="left:120.2px;top:465px;width:1002.8px;height:280.0px;background:#f0f0f0;"></div>
<div class="a" style="left:120.2px;top:470px;width:129.8px;height:125.0px;background:#f0f0f0;border-right:1.5px solid #a8a8a8;border-bottom:1.5px solid #a8a8a8;border-top:1px solid #fff;"></div>
<div class="a" style="left:120.2px;top:595px;width:129.8px;height:124.5px;background:#f0f0f0;border-right:1.5px solid #a8a8a8;border-top:1px solid #fff;"></div>
<div class="a" style="left:134.4px;top:482.5px;width:14.6px;height:3.8px;background:linear-gradient(#dadada,#aaaaaa);border-radius:2px 2px 0 0;"></div>
<div class="a" style="left:134.4px;top:486.3px;width:14.6px;height:4.0px;background:linear-gradient(90deg,#3c3c3c 0%,#2e2e2e 76%,#4f9f4f 80%,#5cb85c 90%,#2f3f2f 96%);border-radius:0 0 1.5px 1.5px;"></div>
<div class="t" style="left:156.2px;top:483.75px;font-size:14px;font-weight:700;">Disk 0</div>
<div class="t" style="left:131.3px;top:503.15px;font-size:14px;">Basic</div>
<div class="t" style="left:131.3px;top:522.74px;font-size:13.3px;">953.85 GB</div>
<div class="t" style="left:131.3px;top:541.15px;font-size:14px;">Online</div>
<div class="a" style="left:134.4px;top:607.5px;width:14.6px;height:3.8px;background:linear-gradient(#dadada,#aaaaaa);border-radius:2px 2px 0 0;"></div>
<div class="a" style="left:134.4px;top:611.3px;width:14.6px;height:4.0px;background:linear-gradient(90deg,#3c3c3c 0%,#2e2e2e 76%,#4f9f4f 80%,#5cb85c 90%,#2f3f2f 96%);border-radius:0 0 1.5px 1.5px;"></div>
<div class="t" style="left:156.2px;top:608.75px;font-size:14px;font-weight:700;">Disk 1</div>
<div class="t" style="left:131.3px;top:628.15px;font-size:14px;">Basic</div>
<div class="t" style="left:131.3px;top:647.74px;font-size:13.3px;">465.76 GB</div>
<div class="t" style="left:131.3px;top:666.15px;font-size:14px;">Online</div>
<div class="a" style="left:250px;top:470px;width:852.0px;height:120.0px;background:#f0f0f0;"></div>
<div class="a" style="left:252px;top:478px;width:151.6px;height:17.0px;background:#000080;"></div>
<div class="a" style="left:252px;top:495px;width:151.6px;height:93.0px;background:#f0f0f0;"></div>
<div class="a" style="left:255.7px;top:498.5px;width:144.9px;height:86.1px;background:#fff;border-left:1.5px solid #a0a0a0;border-top:1.5px solid #a0a0a0;border-right:1px solid #e3e3e3;border-bottom:1px solid #e3e3e3;"></div>
<div class="a" style="left:407px;top:478px;width:460.5px;height:17.0px;background:#000080;"></div>
<div class="a" style="left:407px;top:495px;width:460.5px;height:93.0px;background:#f0f0f0;"></div>
<div class="a" style="left:410.7px;top:498.5px;width:453.8px;height:86.1px;background:#fff;border-left:1.5px solid #a0a0a0;border-top:1.5px solid #a0a0a0;border-right:1px solid #e3e3e3;border-bottom:1px solid #e3e3e3;"></div>
<div class="a" style="left:871.5px;top:478px;width:227.3px;height:17.0px;background:#000080;"></div>
<div class="a" style="left:871.5px;top:495px;width:227.3px;height:93.0px;background:#f0f0f0;"></div>
<div class="a" style="left:875.2px;top:498.5px;width:220.6px;height:86.1px;background:#fff;border-left:1.5px solid #a0a0a0;border-top:1.5px solid #a0a0a0;border-right:1px solid #e3e3e3;border-bottom:1px solid #e3e3e3;"></div>
<div class="a" style="left:403.6px;top:478px;width:3.4px;height:110.0px;background:#dcdcdc;border-left:1px solid #fff;"></div>
<div class="a" style="left:867.5px;top:478px;width:4.0px;height:110.0px;background:#dcdcdc;border-left:1px solid #fff;"></div>
<div class="t" style="left:261.3px;top:524.15px;font-size:14px;">100 MB</div>
<div class="a" style="left:258px;top:540px;width:140px;height:20px;overflow:hidden;">
<div class="t" style="left:3.3px;top:4.16px;font-size:13.4px;">Healthy (EFI System P</div>
</div>
<div class="t" style="left:424.0px;top:504.65px;font-size:14px;font-weight:700;">(C:)</div>
<div class="t" style="left:415.0px;top:524.66px;font-size:13.4px;">952.88 GB NTFS</div>
<div class="t" style="left:415.0px;top:543.65px;font-size:14px;">Healthy (Boot, Page File, Crash Dump, Basic Data Partition)</div>
<div class="t" style="left:880.0px;top:524.55px;font-size:14px;">894 MB</div>
<div class="t" style="left:880.0px;top:543.65px;font-size:14px;">Healthy (Recovery Partition)</div>
<div class="a" style="left:120.2px;top:588px;width:981.8px;height:7.0px;background:#f0f0f0;"></div>
<div class="a" style="left:250px;top:589px;width:852.0px;height:1.2px;background:#a4a4a4;"></div>
<div class="a" style="left:120.2px;top:594px;width:981.8px;height:1.5px;background:#a8a8a8;"></div>
<div class="a" style="left:249.5px;top:470px;width:1.5px;height:249.5px;background:#a8a8a8;"></div>
<div class="a" style="left:252px;top:603px;width:801.2px;height:16.5px;background:#000080;"></div>
<div class="a" style="left:254.7px;top:619.5px;width:799.6px;height:93.5px;background:#bdbdbd;"></div>
<div class="a" style="left:257.3px;top:623.8px;width:793.1px;height:85.4px;background:repeating-linear-gradient(135deg,#ffffff 0px,#ffffff 1.75px,#dedede 1.75px,#dedede 3.15px);"></div>
<div class="a" style="left:1059px;top:598px;width:1.5px;height:121.5px;background:#b0b0b0;"></div>
<div class="t" style="left:261.0px;top:630.15px;font-size:14px;font-weight:700;background:#fff;padding-right:2px;">Transcent  (D:)</div>
<div class="t" style="left:261.0px;top:650.21px;font-size:13.1px;background:#fff;padding-right:6px;">465.76 GB NTFS</div>
<div class="t" style="left:261.0px;top:668.35px;font-size:14px;background:#fff;padding-right:2px;">Healthy (Primary Partition)</div>
<div class="a" style="left:1103px;top:470px;width:20.0px;height:249.5px;background:#f0f0f0;border-left:1px solid #fafafa;"></div>
<div class="a" style="left:1110px;top:485.7px;width:6.0px;height:142.9px;background:#8a8a8a;border-radius:1px;"></div>
<div class="a" style="left:120.2px;top:719.5px;width:1002.8px;height:1.5px;background:#a0a0a0;"></div>
<div class="a" style="left:120.2px;top:743px;width:1002.8px;height:2.0px;background:#a8a8a8;"></div>
<div class="a" style="left:126.6px;top:726px;width:13.0px;height:13.7px;background:#000;"></div>
<div class="t" style="left:145.5px;top:726.15px;font-size:14px;">Unallocated</div>
<div class="a" style="left:226.7px;top:726px;width:12.5px;height:13.7px;background:#00007e;"></div>
<div class="t" style="left:245.0px;top:725.90px;font-size:14.3px;">Primary partition</div>
<div class="a" style="left:120.2px;top:745px;width:1004.8px;height:28.0px;background:#f0f0f0;"></div>
<div class="a" style="left:863px;top:747px;width:1.0px;height:26.0px;background:#d8d8d8;"></div>
<div class="a" style="left:1021.5px;top:747px;width:1.0px;height:26.0px;background:#d8d8d8;"></div>
</div>
<div class="a" style="left:431.6px;top:279.6px;width:378.9px;height:279.9px;background:#f0f0f0;border:1px solid #c4c4c4;border-radius:8px;box-shadow:0 8px 26px rgba(0,0,0,0.26);"></div>
<div class="a" style="left:432.6px;top:280.6px;width:376.9px;height:35.4px;background:#f3f3f3;border-radius:7px 7px 0 0;"></div>
<div class="t" style="left:442.3px;top:291.20px;font-size:13.7px;color:#8a8a8a;">Format D:</div>
<svg class="a" style="left:784px;top:292px" width="13" height="13" viewBox="0 0 13 13"><path d="M0.8 0.8L12.2 12.2M12.2 0.8L0.8 12.2" stroke="#7f7f7f" stroke-width="1.1" fill="none"/></svg>
<div class="t" style="left:445.9px;top:336.90px;font-size:12.4px;color:#1b1b1b;">Volume label:</div>
<div class="t" style="left:445.9px;top:370.00px;font-size:12.4px;color:#1b1b1b;">File system:</div>
<div class="t" style="left:445.9px;top:403.00px;font-size:12.4px;color:#1b1b1b;">Allocation unit size:</div>
<div class="a" style="left:588.7px;top:329.6px;width:208.1px;height:26.8px;background:#fff;border-bottom:1.5px solid #8b9bab;border-radius:3px 3px 0 0;"></div>
<div class="t" style="left:593.2px;top:334.39px;font-size:12.3px;color:#1b1b1b;">LaCie</div>
<div class="a" style="left:588.7px;top:366px;width:208.1px;height:22.5px;background:#fbfbfb;border:1px solid #e3e3e3;border-radius:3px;"></div>
<div class="t" style="left:593.5px;top:370.90px;font-size:12.4px;color:#1b1b1b;">NTFS</div>
<svg class="a" style="left:781px;top:372.8px" width="13" height="9" viewBox="0 0 13 9"><path d="M1 1.5L6.5 7L12 1.5" stroke="#555" stroke-width="1.1" fill="none"/></svg>
<div class="a" style="left:588.7px;top:398.3px;width:208.1px;height:22.3px;background:#fbfbfb;border:1px solid #e3e3e3;border-radius:3px;"></div>
<div class="t" style="left:593.5px;top:403.50px;font-size:12.4px;color:#1b1b1b;">Default</div>
<svg class="a" style="left:781px;top:405.0px" width="13" height="9" viewBox="0 0 13 9"><path d="M1 1.5L6.5 7L12 1.5" stroke="#555" stroke-width="1.1" fill="none"/></svg>
<div class="a" style="left:445.5px;top:447.2px;width:15.0px;height:14.8px;background:#005fb8;border-radius:3px;"></div>
<svg class="a" style="left:445.5px;top:447.2px" width="15" height="15" viewBox="0 0 15 15"><path d="M3.8 7.6L6.3 10.1L11.2 5" stroke="#fff" stroke-width="1.1" fill="none"/></svg>
<div class="t" style="left:465.0px;top:448.70px;font-size:12.4px;color:#1b1b1b;">Perform a quick format</div>
<div class="a" style="left:445.5px;top:472.2px;width:15.0px;height:14.8px;background:#f6f6f6;border:1px solid #8d8d8d;border-radius:3px;"></div>
<div class="t" style="left:465.0px;top:473.70px;font-size:12.4px;color:#1b1b1b;">Enable file and folder compression</div>
<div class="a" style="left:613.9px;top:518.3px;width:86.4px;height:24.8px;background:#fdfdfd;border:1px solid #e2e2e2;border-bottom-color:#d0d0d0;border-radius:3px;"></div>
<div class="a" style="left:709.5px;top:518.3px;width:86.9px;height:24.8px;background:#fdfdfd;border:1px solid #e2e2e2;border-bottom-color:#d0d0d0;border-radius:3px;"></div>
<div class="t" style="left:648.5px;top:525.44px;font-size:12px;color:#1b1b1b;">OK</div>
<div class="t" style="left:733.8px;top:525.02px;font-size:12.5px;color:#1b1b1b;">Cancel</div>
</body></html>
